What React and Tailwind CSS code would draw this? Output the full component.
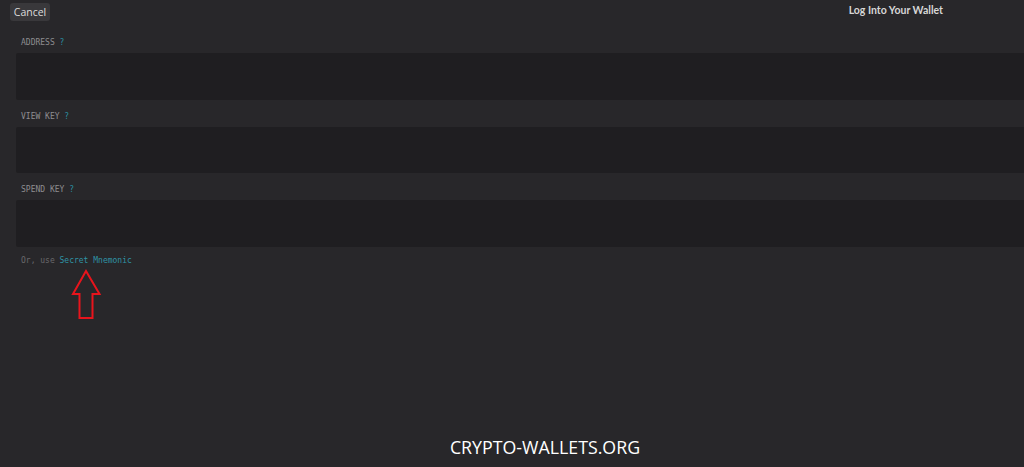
export default function App() {
  const mono = { fontFamily: '"DejaVu Sans Mono", "Liberation Mono", monospace' };
  const Field = ({ label }) => (
    <div className="flex flex-col">
      <div className="h-[27px] pt-[12px] pl-[5px] text-[8px] leading-[10px] text-[#8e8d90]" style={mono}>
        {label} <span className="text-[#2a8ea0]">?</span>
      </div>
      <div className="h-[46.5px] bg-[#1f1e21] rounded-l-[2px]" />
    </div>
  );
  return (
    <div className="relative w-[1024px] h-[467px] bg-[#28272a] overflow-hidden" style={{ fontFamily: '"Open Sans", "DejaVu Sans", sans-serif' }}>
      <div className="h-[26px] flex items-start justify-between">
        <button className="mt-[3px] ml-[10px] h-[18px] w-[40px] rounded-[3px] bg-[#39383b] text-[#dcdcdc] text-[10.5px] leading-[18px] text-center">
          Cancel
        </button>
        <div className="mt-[3px] mr-[81px] text-[10.5px] leading-[14px] font-bold text-[#d6d6d6]" style={{ fontFamily: 'Lato, "Open Sans", sans-serif' }}>
          Log Into Your Wallet
        </div>
      </div>
      <div className="pl-[16px] flex flex-col">
        <Field label="ADDRESS" />
        <Field label="VIEW KEY" />
        <Field label="SPEND KEY" />
        <div className="pt-[9px] pl-[5px] text-[8px] leading-[10px] text-[#6a696c]" style={mono}>
          Or, use <span className="text-[#2f93a6]">Secret Mnemonic</span>
        </div>
      </div>
      <svg className="absolute left-0 top-0" width="120" height="340" viewBox="0 0 120 340">
        <polygon points="86,271 73,294 79.5,294 79.5,318 92.5,318 92.5,294 99.5,294" fill="none" stroke="#e8141c" strokeWidth="2" strokeLinejoin="miter" />
      </svg>
      <div className="absolute left-0 right-0 top-[435px] flex justify-center">
        <div className="ml-[66px] text-[17.8px] leading-[24px] text-white" style={{ fontFamily: '"Open Sans", sans-serif' }}>
          CRYPTO-WALLETS.ORG
        </div>
      </div>
    </div>
  );
}
